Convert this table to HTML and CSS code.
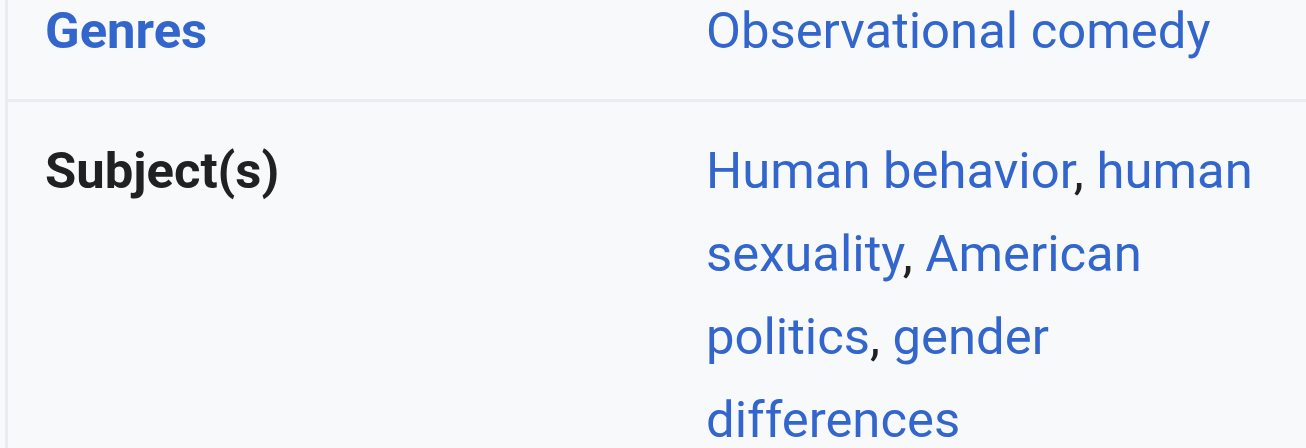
FILE: index.html
```html
<!DOCTYPE html>
<html lang="en">
<head>
<meta charset="utf-8">
<title>Infobox</title>
<link rel="stylesheet" href="styles.css">
</head>
<body>
<div class="infobox">
  <div class="row first">
    <div class="label"><a class="link" href="#">Genres</a></div>
    <div class="value"><a class="link" href="#">Observational comedy</a></div>
  </div>
  <div class="row">
    <div class="label">Subject(s)</div>
    <div class="value"><a class="link" href="#">Human behavior</a>, <a class="link" href="#">human sexuality</a>, <a class="link" href="#">American politics</a>, <a class="link" href="#">gender differences</a></div>
  </div>
</div>
</body>
</html>
```

FILE: styles.css
```css
html, body {
  margin: 0;
  padding: 0;
  background: #f8f9fa;
}
body {
  font-family: Roboto, "Liberation Sans", sans-serif;
  font-size: 50.8px;
  line-height: 83px;
  color: #202122;
  overflow: hidden;
}
.infobox {
  margin-left: 5px;
  margin-top: -11px;
  border-left: 3px solid #eaecf0;
}
.row {
  display: grid;
  grid-template-columns: 698px 580px;
  padding: 27px 0;
  border-top: 3px solid #eaecf0;
}
.row.first {
  border-top: none;
  padding-top: 0;
}
.label {
  padding-left: 37px;
  font-weight: 700;
}
.link {
  color: #3366cc;
  text-decoration: none;
}
.value {
  font-weight: 400;
}
```
